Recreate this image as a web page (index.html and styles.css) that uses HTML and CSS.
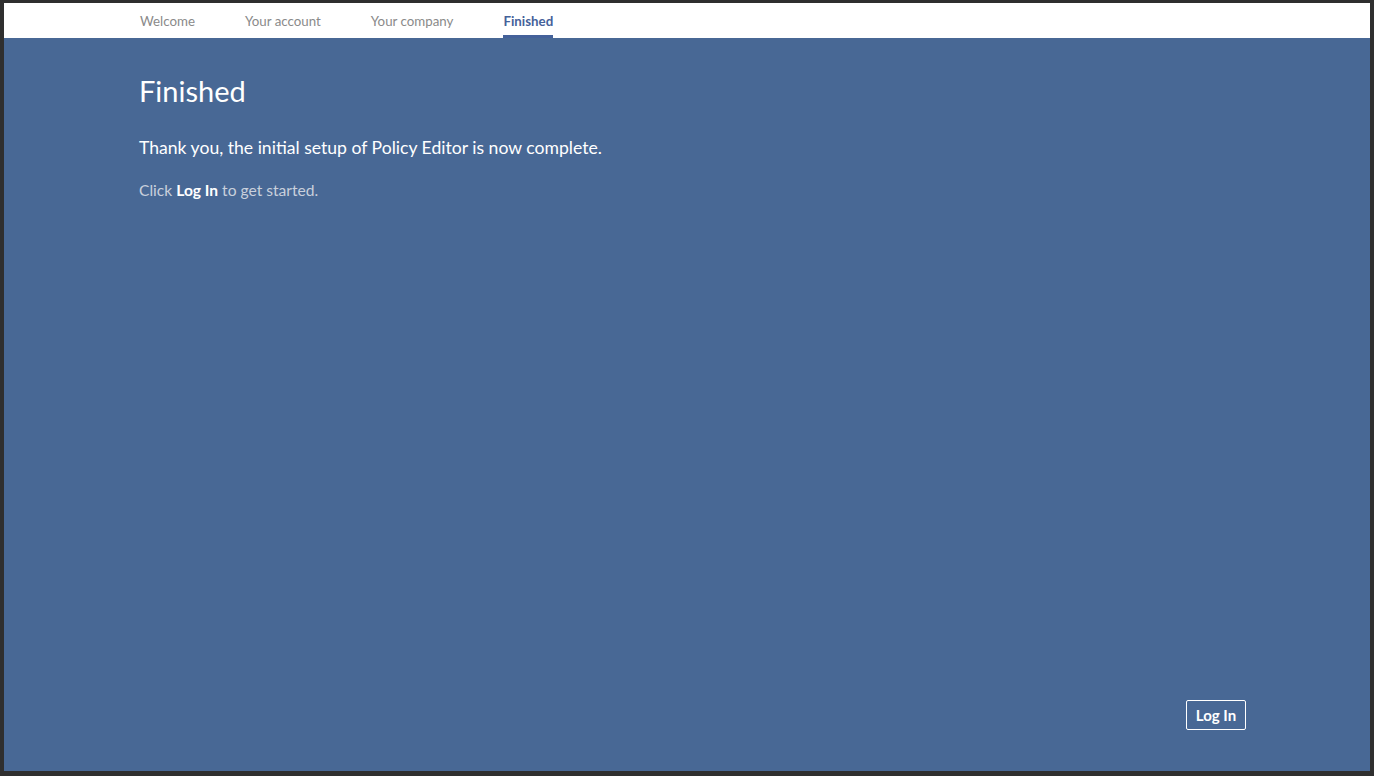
FILE: index.html
```html
<!DOCTYPE html>
<html>
<head>
<meta charset="utf-8">
<link rel="stylesheet" href="styles.css">
</head>
<body>
<div class="frame">
  <header class="topbar">
    <nav class="steps">
      <span class="step">Welcome</span>
      <span class="step">Your account</span>
      <span class="step">Your company</span>
      <span class="step active">Finished</span>
    </nav>
  </header>
  <main class="content">
    <div class="body">
      <h1 class="title">Finished</h1>
      <p class="lead">Thank you, the initial setup of Policy Editor is now complete.</p>
      <p class="hint">Click <strong>Log In</strong> to get started.</p>
    </div>
    <div class="actions">
      <button class="btn">Log In</button>
    </div>
  </main>
</div>
</body>
</html>
```
FILE: styles.css
```css
html, body {
  margin: 0;
  padding: 0;
  height: 100%;
}
body {
  background: #2f2f2f;
  font-family: Lato, "Noto Sans", sans-serif;
}
.frame {
  box-sizing: border-box;
  height: 100%;
  padding: 3px 4px 5px 4px;
  display: flex;
  flex-direction: column;
}
.topbar {
  background: #ffffff;
  height: 35px;
  flex: none;
}
.steps {
  display: flex;
  gap: 50px;
  padding-left: 136px;
  height: 100%;
  align-items: stretch;
}
.step {
  font-size: 13.3px;
  color: #8a8a8a;
  display: flex;
  align-items: center;
  padding-top: 4px;
  box-sizing: border-box;
  border-bottom: 3px solid transparent;
}
.step.active {
  color: #44619a;
  font-weight: bold;
  border-bottom-color: #44619a;
}
.content {
  flex: 1;
  background: #486895;
  display: flex;
  flex-direction: column;
  justify-content: space-between;
  padding: 0 124px 41px 135px;
}
.title {
  font-weight: normal;
  color: #ffffff;
  font-size: 29px;
  margin: 36px 0 0 0;
  line-height: 34px;
}
.lead {
  color: #ffffff;
  font-size: 17.6px;
  margin: 30px 0 0 0;
  line-height: 20px;
}
.hint {
  color: #c9d0dc;
  font-size: 15.6px;
  margin: 23px 0 0 0;
  line-height: 18px;
}
.hint strong {
  color: #ffffff;
}
.actions {
  display: flex;
  justify-content: flex-end;
}
.btn {
  background: transparent;
  border: 1px solid #ffffff;
  border-radius: 2px;
  color: #ffffff;
  font-family: inherit;
  font-weight: bold;
  font-size: 15px;
  width: 60px;
  height: 30px;
  padding: 0;
}
```
